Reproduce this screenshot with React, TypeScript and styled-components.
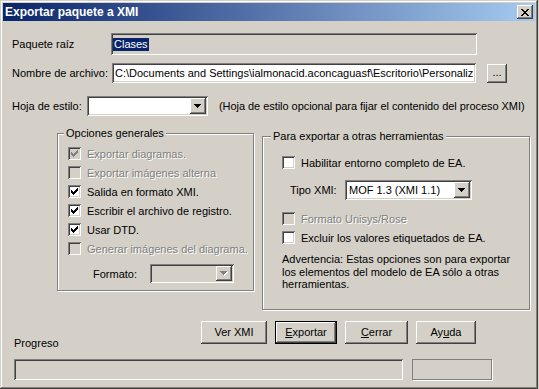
import React from 'react';
import styled, { createGlobalStyle } from 'styled-components';

const GlobalStyle = createGlobalStyle`
  html, body {
    margin: 0;
    padding: 0;
    background: #d4d0c8;
  }
`;

const raised = `
  box-shadow: inset -1px -1px #404040, inset 1px 1px #fff,
    inset -2px -2px #808080, inset 2px 2px #d4d0c8;
`;

const sunken = `
  box-shadow: inset 1px 1px #808080, inset -1px -1px #fff,
    inset 2px 2px #404040, inset -2px -2px #d4d0c8;
`;

const Window = styled.div`
  width: 538px;
  height: 389px;
  box-sizing: border-box;
  padding: 3px;
  background: #d4d0c8;
  box-shadow: inset -1px -1px #404040, inset 1px 1px #d4d0c8,
    inset -2px -2px #808080, inset 2px 2px #fff;
  display: flex;
  flex-direction: column;
  font-family: 'Liberation Sans', Arial, sans-serif;
  font-size: 11px;
  color: #000;
`;

const TitleBar = styled.div`
  height: 18px;
  flex: none;
  display: flex;
  align-items: center;
  justify-content: space-between;
  padding: 0 2px;
  background: linear-gradient(to right, #0a246a, #a6caf0);
`;

const Title = styled.span`
  color: #fff;
  font-weight: bold;
  font-size: 12px;
  white-space: nowrap;
`;

const CloseButton = styled.div`
  width: 16px;
  height: 14px;
  box-sizing: border-box;
  background: #d4d0c8;
  ${raised}
  display: flex;
  align-items: center;
  justify-content: center;
  padding-right: 1px;
`;

const Content = styled.div`
  display: flex;
  flex-direction: column;
  padding-left: 9px;
`;

const Row = styled.div<{ $top: number }>`
  display: flex;
  align-items: center;
  margin-top: ${(p) => p.$top}px;
`;

const Label = styled.span<{ $w?: number; $indent?: number; $disabled?: boolean }>`
  flex: none;
  width: ${(p) => (p.$w ? `${p.$w}px` : 'auto')};
  margin-left: ${(p) => p.$indent || 0}px;
  white-space: nowrap;
  color: ${(p) => (p.$disabled ? '#808080' : '#000')};
  text-shadow: ${(p) => (p.$disabled ? '1px 1px 0 #fff' : 'none')};
`;

const TextBox = styled.div<{ $w: number; $h: number; $readOnly?: boolean }>`
  box-sizing: border-box;
  flex: none;
  width: ${(p) => p.$w}px;
  height: ${(p) => p.$h}px;
  background: ${(p) => (p.$readOnly ? '#d4d0c8' : '#fff')};
  ${sunken}
  display: flex;
  align-items: center;
  padding: 0 3px;
  overflow: hidden;
  white-space: nowrap;
`;

const Selection = styled.span`
  background: #0a246a;
  color: #fff;
  line-height: 13px;
  padding: 0 1px;
  margin-left: -1px;
`;

const SmallButton = styled.div`
  box-sizing: border-box;
  flex: none;
  width: 20px;
  height: 19px;
  margin-left: 11px;
  background: #d4d0c8;
  ${raised}
  display: flex;
  align-items: center;
  justify-content: center;
  padding-bottom: 2px;
`;

const Note = styled.span`
  margin-left: 11px;
  white-space: nowrap;
  letter-spacing: -0.05px;
`;

const ComboBox = styled.div<{ $w: number; $h: number; $disabled?: boolean }>`
  box-sizing: border-box;
  flex: none;
  width: ${(p) => p.$w}px;
  height: ${(p) => p.$h}px;
  padding: 2px;
  background: ${(p) => (p.$disabled ? '#d4d0c8' : '#fff')};
  ${sunken}
  display: flex;
  align-items: stretch;
`;

const ComboText = styled.span`
  flex: 1;
  display: flex;
  align-items: center;
  padding-left: 2px;
  white-space: nowrap;
  overflow: hidden;
`;

const DropButton = styled.div`
  box-sizing: border-box;
  width: 16px;
  flex: none;
  background: #d4d0c8;
  ${raised}
  display: flex;
  align-items: center;
  justify-content: center;
`;

const GroupsRow = styled.div`
  display: flex;
  align-items: flex-start;
  margin-top: 11px;
`;

const Group = styled.fieldset<{ $w: number; $h: number; $left: number; $top: number }>`
  box-sizing: border-box;
  flex: none;
  width: ${(p) => p.$w}px;
  height: ${(p) => p.$h}px;
  margin: ${(p) => p.$top}px 0 0 ${(p) => p.$left}px;
  padding: 0;
  border: 1px solid #808080;
  box-shadow: inset 1px 1px #fff, 1px 1px #fff;
  min-inline-size: 0;
`;

const Legend = styled.legend<{ $offset: number }>`
  padding: 0 2px;
  margin-left: ${(p) => p.$offset}px;
  line-height: 13px;
  background: #d4d0c8;
  white-space: nowrap;
`;

const GroupBody = styled.div<{ $padTop: number; $padLeft: number }>`
  display: flex;
  flex-direction: column;
  padding: ${(p) => p.$padTop}px 0 0 ${(p) => p.$padLeft}px;
`;

const CheckRow = styled.div<{ $top?: number }>`
  display: flex;
  align-items: center;
  gap: 6px;
  height: 19px;
  margin-top: ${(p) => p.$top || 0}px;
`;

const Box = styled.div<{ $disabled?: boolean }>`
  box-sizing: border-box;
  flex: none;
  width: 13px;
  height: 13px;
  padding: 3px;
  background: ${(p) => (p.$disabled ? '#d4d0c8' : '#fff')};
  ${sunken}
  display: flex;
`;

const Warning = styled.div`
  margin-top: 6px;
  line-height: 12.5px;
  white-space: nowrap;
`;

const Footer = styled.div`
  display: grid;
  grid-template-columns: 189px auto;
  grid-template-rows: 29px auto;
  margin-top: 11px;
`;

const ProgressLabel = styled.span`
  grid-column: 1;
  grid-row: 1;
  align-self: end;
  padding-left: 2px;
  line-height: 13px;
`;

const ButtonRow = styled.div`
  grid-column: 2;
  grid-row: 1;
  align-self: start;
  display: flex;
  gap: 8px;
`;

const Button = styled.div<{ $w: number; $default?: boolean }>`
  box-sizing: border-box;
  width: ${(p) => p.$w}px;
  height: 23px;
  background: #d4d0c8;
  display: flex;
  align-items: center;
  justify-content: center;
  padding-bottom: 1px;
  ${(p) =>
    p.$default
      ? `border: 1px solid #000;
         box-shadow: inset -1px -1px #404040, inset 1px 1px #fff, inset -2px -2px #808080, inset 2px 2px #d4d0c8;`
      : raised}
`;

const BarsRow = styled.div`
  grid-column: 1 / -1;
  grid-row: 2;
  display: flex;
  gap: 9px;
  margin-top: 9px;
  padding-left: 2px;
`;

const ProgressBar = styled.div`
  box-sizing: border-box;
  width: 389px;
  height: 21px;
  ${sunken}
`;

const StatusBox = styled.div`
  box-sizing: border-box;
  width: 80px;
  height: 21px;
  border: 1px solid #808080;
  box-shadow: 1px 1px #fff;
`;

const CloseGlyph = () => {
  const cells: [number, number, number][] = [
    [0, 0, 2], [6, 0, 2],
    [1, 1, 2], [5, 1, 2],
    [2, 2, 4],
    [3, 3, 2],
    [2, 4, 4],
    [1, 5, 2], [5, 5, 2],
    [0, 6, 2], [6, 6, 2],
  ];
  return (
    <svg width="8" height="7" viewBox="0 0 8 7" shapeRendering="crispEdges">
      {cells.map(([x, y, w], i) => (
        <rect key={i} x={x} y={y} width={w} height={1} fill="#000" />
      ))}
    </svg>
  );
};

const Arrow = ({ disabled }: { disabled?: boolean }) => {
  const rows = [7, 5, 3, 1];
  return (
    <svg width="8" height="5" viewBox="0 0 8 5" shapeRendering="crispEdges">
      {disabled &&
        rows.map((w, y) => (
          <rect key={`s${y}`} x={(7 - w) / 2 + 1} y={y + 1} width={w} height={1} fill="#fff" />
        ))}
      {rows.map((w, y) => (
        <rect key={y} x={(7 - w) / 2} y={y} width={w} height={1} fill={disabled ? '#808080' : '#000'} />
      ))}
    </svg>
  );
};

const CheckMark = ({ color }: { color: string }) => (
  <svg width="7" height="7" viewBox="0 0 7 7" shapeRendering="crispEdges">
    {[2, 3, 4, 3, 2, 1, 0].map((y, x) => (
      <rect key={x} x={x} y={y} width={1} height={3} fill={color} />
    ))}
  </svg>
);

type CheckProps = { label: string; checked?: boolean; disabled?: boolean; top?: number };

const Check = ({ label, checked, disabled, top }: CheckProps) => (
  <CheckRow $top={top}>
    <Box $disabled={disabled}>{checked && <CheckMark color={disabled ? '#808080' : '#000'} />}</Box>
    <Label $disabled={disabled}>{label}</Label>
  </CheckRow>
);

type ComboProps = { w: number; h: number; value?: string; disabled?: boolean };

const Combo = ({ w, h, value, disabled }: ComboProps) => (
  <ComboBox $w={w} $h={h} $disabled={disabled}>
    <ComboText>{value}</ComboText>
    <DropButton>
      <Arrow disabled={disabled} />
    </DropButton>
  </ComboBox>
);

export default function App() {
  return (
    <>
      <GlobalStyle />
      <Window>
        <TitleBar>
          <Title>Exportar paquete a XMI</Title>
          <CloseButton>
            <CloseGlyph />
          </CloseButton>
        </TitleBar>

        <Content>
          <Row $top={12}>
            <Label $w={99}>Paquete raíz</Label>
            <TextBox $w={366} $h={22} $readOnly>
              <Selection>Clases</Selection>
            </TextBox>
          </Row>

          <Row $top={8}>
            <Label $w={100}>Nombre de archivo:</Label>
            <TextBox $w={364} $h={20}>
              C:\Documents and Settings\ialmonacid.aconcaguasf\Escritorio\Personaliz
            </TextBox>
            <SmallButton>...</SmallButton>
          </Row>

          <Row $top={13}>
            <Label $w={75}>Hoja de estilo:</Label>
            <Combo w={121} h={20} />
            <Note>(Hoja de estilo opcional para fijar el contenido del proceso XMI)</Note>
          </Row>

          <GroupsRow>
            <Group $w={197} $h={164} $left={45} $top={0}>
              <Legend $offset={6}>Opciones generales</Legend>
              <GroupBody $padTop={4} $padLeft={10}>
                <Check label="Exportar diagramas." checked disabled />
                <Check label="Exportar imágenes alterna" disabled />
                <Check label="Salida en formato XMI." checked />
                <Check label="Escribir el archivo de registro." checked />
                <Check label="Usar DTD." checked />
                <Check label="Generar imágenes del diagrama." disabled />
                <Row $top={6}>
                  <Label $w={57} $indent={25}>
                    Formato:
                  </Label>
                  <Combo w={84} h={19} disabled />
                </Row>
              </GroupBody>
            </Group>

            <Group $w={268} $h={180} $left={8} $top={3}>
              <Legend $offset={8}>Para exportar a otras herramientas</Legend>
              <GroupBody $padTop={10} $padLeft={19}>
                <Check label="Habilitar entorno completo de EA." />
                <Row $top={8}>
                  <Label $w={55} $indent={8}>
                    Tipo XMI:
                  </Label>
                  <Combo w={127} h={20} value="MOF 1.3 (XMI 1.1)" />
                </Row>
                <Check label="Formato Unisys/Rose" disabled top={9} />
                <Check label="Excluir los valores etiquetados de EA." />
                <Warning>
                  Advertencia: Estas opciones son para exportar
                  <br />
                  los elementos del modelo de EA sólo a otras
                  <br />
                  herramientas.
                </Warning>
              </GroupBody>
            </Group>
          </GroupsRow>

          <Footer>
            <ProgressLabel>Progreso</ProgressLabel>
            <ButtonRow>
              <Button $w={66}>Ver XMI</Button>
              <Button $w={62} $default>
                <span>
                  <u>E</u>xportar
                </span>
              </Button>
              <Button $w={63}>
                <span>
                  <u>C</u>errar
                </span>
              </Button>
              <Button $w={60}>
                <span>
                  Ay<u>u</u>da
                </span>
              </Button>
            </ButtonRow>
            <BarsRow>
              <ProgressBar />
              <StatusBox />
            </BarsRow>
          </Footer>
        </Content>
      </Window>
    </>
  );
}
